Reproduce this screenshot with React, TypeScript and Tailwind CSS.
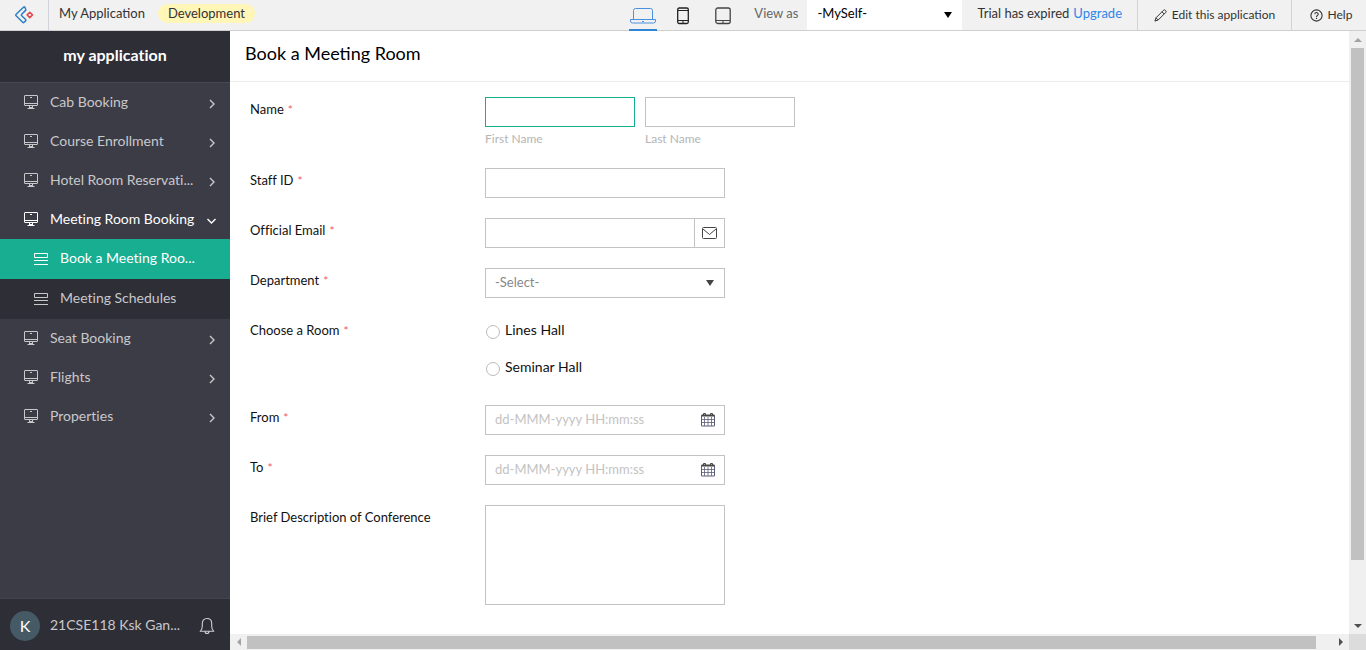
import { useState } from "react";
import type { ReactNode } from "react";

function CreatorLogo() {
  return (
    <svg width="20" height="20" viewBox="0 0 20 20" fill="none" strokeWidth="1.5" aria-hidden="true">
      <path d="M9.5 2.2 2.1 9.2a1 1 0 0 0 0 1.5l6.600 6.600a1 1 0 0 0 1.400 0l1.500-1.400a1 1 0 0 0 0-1.400L7.700 10.800a1 1 0 0 1 0-1.500l3.900-3.900a1 1 0 0 0 0-1.400L10.900 2.300a1 1 0 0 0-1.400-.1Z" stroke="#2f7fc4" strokeLinejoin="round" />
      <path d="m15.8 7.2 2.7 2.7-2.7 2.7-2.7-2.7Z" stroke="#e5484d" strokeLinejoin="round" />
    </svg>
  );
}

function LaptopIcon() {
  return (
    <svg width="26" height="18" viewBox="0 0 26 18" fill="none" stroke="#4a90e2" aria-hidden="true">
      <path d="M3.5 12.5v-9a2 2 0 0 1 2-2h15a2 2 0 0 1 2 2v9" />
      <path d="M.5 12.500h25v1.500a2 2 0 0 1-2 2h-21a2 2 0 0 1-2-2Z" />
      <path d="M12 14.500h2" />
    </svg>
  );
}

function PhoneIcon() {
  return (
    <svg width="12" height="18" viewBox="0 0 12 18" fill="none" stroke="#222" aria-hidden="true">
      <rect x=".7" y="1" width="10.6" height="15.500" rx="1.500" strokeWidth="1.3" />
      <path d="M1 3.5h10M1 13.5h10M5 15h2" />
    </svg>
  );
}

function TabletIcon() {
  return (
    <svg width="16" height="18" viewBox="0 0 16 18" fill="none" stroke="#444" aria-hidden="true">
      <rect x=".8" y="1" width="14.4" height="15.500" rx="2" strokeWidth="1.3" />
      <path d="M1 13.5h14M7 15h2" />
    </svg>
  );
}

function PencilIcon() {
  return (
    <svg width="13" height="13" viewBox="0 0 13 13" fill="none" stroke="#333" strokeLinejoin="round" aria-hidden="true">
      <path d="M.9 12.1 2 8.8 9.6 1.2a1.2 1.2 0 0 1 1.6 0l.6.6a1.2 1.2 0 0 1 0 1.6L4.2 11ZM8 2.8 10.2 5M2 8.8 4.2 11" />
    </svg>
  );
}

function HelpIcon() {
  return (
    <svg width="13" height="13" viewBox="0 0 13 13" fill="none" stroke="#333" strokeWidth="1.1" aria-hidden="true">
      <circle cx="6.5" cy="6.5" r="5.6" />
      <path d="M4.8 5.3a1.7 1.7 0 1 1 2.4 1.5c-.5.3-.7.5-.7 1.1M6.5 8.8v1.1" />
    </svg>
  );
}

function MonitorIcon() {
  return (
    <svg width="16" height="14" viewBox="0 0 16 14" fill="none" stroke="currentColor" aria-hidden="true">
      <rect x="1.500" y=".5" width="13" height="10" rx=".5" />
      <path d="M2 8.5h12M7 2.5h2M6.5 10.5v2M9.5 10.5v2M4.500 13.500h7M6 12.500h4" />
    </svg>
  );
}

function FormIcon() {
  return (
    <svg width="14" height="12" viewBox="0 0 14 12" fill="none" stroke="currentColor" aria-hidden="true">
      <path d="M.5.5h13v4H.5ZM0 7.500h14M0 11.5h14" />
    </svg>
  );
}

function Chevron({ down = false }: { down?: boolean }) {
  return (
    <svg width="10" height="10" viewBox="0 0 10 10" fill="none" stroke="currentColor" strokeWidth="1.4" aria-hidden="true">
      <path d={down ? "m.5 3 4 4 4-4" : "m3 1 4 4-4 4"} />
    </svg>
  );
}

function BellIcon() {
  return (
    <svg width="16" height="18" viewBox="0 0 16 18" fill="none" stroke="#d0d0d2" strokeWidth="1.1" aria-hidden="true">
      <path d="M1.2 14.3c1.6-1.4 2.1-2.600 2.100-5V6.500C3.300 3.500 5 1.500 8 1.500s4.700 2 4.700 5v2.800c0 2.400.5 3.600 2.100 5ZM6 14.500a2 2 0 0 0 4 0" strokeLinejoin="round" />
    </svg>
  );
}

function MailIcon() {
  return (
    <svg width="15" height="12" viewBox="0 0 15 12" fill="none" stroke="#444" aria-hidden="true">
      <rect x=".5" y=".5" width="14" height="11" rx="1" />
      <path d="m1 2 6.500 5.500L14 2" />
    </svg>
  );
}

function CalendarIcon() {
  return (
    <svg width="14" height="15" viewBox="0 0 14 15" fill="none" stroke="#5c5d78" aria-hidden="true">
      <path d="M.5 3.500h13v10.500H.5Z" />
      <path d="M.5 3.500h13" stroke="#444" strokeWidth="2" />
      <path d="M.5 7.500h13M.5 10.500h13M3.500 5v9M7 5v9M10.500 5v9" strokeWidth=".8" />
      <path d="M2.500 3V1.500h2V3M9.500 3V1.500h2V3" stroke="#444" />
    </svg>
  );
}

type TriangleDir = "up" | "down" | "left" | "right";
const trianglePaths: Record<TriangleDir, string> = {
  up: "M0 6 4 2l4 4Z",
  down: "M0 2h8L4 6Z",
  left: "M6 0v8L2 4Z",
  right: "M2 0v8l4-4Z",
};

function Triangle({ dir, color }: { dir: TriangleDir; color: string }) {
  return (
    <svg width="8" height="8" viewBox="0 0 8 8" fill={color} aria-hidden="true">
      <path d={trianglePaths[dir]} />
    </svg>
  );
}

function SelectArrow({ color }: { color: string }) {
  return (
    <svg width="10" height="8" viewBox="0 0 10 8" fill={color} aria-hidden="true">
      <path d="M1 1h8L5 7Z" />
    </svg>
  );
}

function TopBar() {
  const [device, setDevice] = useState("laptop");
  const devices: { id: string; name: string; icon: ReactNode }[] = [
    { id: "laptop", name: "Desktop", icon: <LaptopIcon /> },
    { id: "phone", name: "Phone", icon: <PhoneIcon /> },
    { id: "tablet", name: "Tablet", icon: <TabletIcon /> },
  ];
  return (
    <header className="flex h-[31px] shrink-0 items-stretch border-b border-[#cfcfd2] bg-[#f1f1f1] text-[13px] text-[#333]">
      <a href="#home" aria-label="Creator home" className="flex w-[49px] items-center justify-center border-r border-[#d2d2dc]">
        <CreatorLogo />
      </a>
      <div className="flex items-center gap-[13px] pb-[3px] pl-[10px]">
        <span>My Application</span>
        <span className="rounded-full bg-[#fff6b8] px-[10px] leading-[19px]">Development</span>
      </div>
      <div className="ml-auto flex items-stretch">
        <div className="flex gap-3 pr-[17px]">
          {devices.map((d) => (
            <button
              key={d.id}
              type="button"
              aria-label={d.name}
              onClick={() => setDevice(d.id)}
              className={`-mb-px flex w-7 items-center justify-center border-b-2 pt-[2px] ${device === d.id ? "border-[#2f86d6]" : "border-transparent"}`}
            >
              {d.icon}
            </button>
          ))}
        </div>
        <label htmlFor="view-as" className="flex items-center pb-[3px] pr-[9px] text-[#666]">View as</label>
        <div className="relative">
          <select id="view-as" className="h-full w-[155px] appearance-none bg-white pb-[2px] pl-[10px] text-[13px] text-black outline-none">
            <option>-MySelf-</option>
          </select>
          <span className="pointer-events-none absolute right-[9px] top-[11px]">
            <SelectArrow color="#000" />
          </span>
        </div>
        <div className="flex items-center gap-1 px-[15px] pb-[3px]">
          <span>Trial has expired</span>
          <a href="#upgrade" className="text-[#2f86e8]">Upgrade</a>
        </div>
        <button type="button" className="flex w-[154px] items-center justify-center gap-[5px] border-l border-[#d2d2dc] text-[12px]">
          <PencilIcon />
          Edit this application
        </button>
        <button type="button" className="flex w-[75px] items-center justify-center gap-[5px] border-l border-[#d2d2dc] pl-1 text-[12px]">
          <HelpIcon />
          Help
        </button>
      </div>
    </header>
  );
}

function NavItem({ title, open = false }: { title: string; open?: boolean }) {
  return (
    <a href="#section" className={`flex h-[39px] items-center pb-[2px] pl-[23px] pr-[13px] ${open ? "text-white" : "text-[#c8c8cb]"}`}>
      <MonitorIcon />
      <span className="ml-[11px] min-w-0 flex-1 truncate pb-px">{title}</span>
      <span className="ml-[6px] pt-[5px]"><Chevron down={open} /></span>
    </a>
  );
}

function SubItem({ title, active = false }: { title: string; active?: boolean }) {
  return (
    <a href="#page" className={`flex h-10 items-center gap-3 pl-[34px] pr-[20px] ${active ? "bg-[#18ae91] text-white" : "bg-[#2e2e37] text-[#c8c8cb]"}`}>
      <span className="shrink-0"><FormIcon /></span>
      <span className="truncate pb-[3px]">{title}</span>
    </a>
  );
}

function Sidebar() {
  return (
    <aside className="flex w-[230px] shrink-0 flex-col bg-[#3c3c46] text-[14px] [font-variant-ligatures:none]">
      <h2 className="flex h-[52px] shrink-0 items-center justify-center border-b border-[#484852] bg-[#2e2e37] pb-[4px] text-[16px] font-bold text-white">
        my application
      </h2>
      <nav className="min-h-0 flex-1 overflow-hidden">
        <NavItem title="Cab Booking" />
        <NavItem title="Course Enrollment" />
        <NavItem title="Hotel Room Reservati..." />
        <NavItem title="Meeting Room Booking" open />
        <SubItem title="Book a Meeting Roo..." active />
        <SubItem title="Meeting Schedules" />
        <NavItem title="Seat Booking" />
        <NavItem title="Flights" />
        <NavItem title="Properties" />
      </nav>
      <div className="flex h-[52px] shrink-0 items-center border-t border-[#44444f] bg-[#2e2e37] pl-[10px] pr-[15px] pt-[2px] text-[#c8c8cb]">
        <span className="flex size-[30px] shrink-0 items-center justify-center rounded-full bg-[#455a64] text-[16px] text-white">K</span>
        <span className="ml-[10px] whitespace-nowrap pb-[2px]">21CSE118 Ksk Gan...</span>
        <button type="button" aria-label="Notifications" className="ml-auto"><BellIcon /></button>
      </div>
    </aside>
  );
}

const box = "h-[30px] border bg-white px-[9px] text-[13px] outline-none focus:border-[#18ae91]";
const idle = "border-[#c3c3c3]";

function Row({ label, htmlFor, required = true, children }: { label: string; htmlFor?: string; required?: boolean; children: ReactNode }) {
  return (
    <div className="flex items-start">
      <label htmlFor={htmlFor} className="w-[235px] shrink-0 pt-1 text-[13px] leading-[17px] text-[#111]">
        {label}
        {required && <span className="ml-1 text-[12px] text-[#f25c5c]">*</span>}
      </label>
      {children}
    </div>
  );
}

function DateField({ id }: { id: string }) {
  return (
    <div className="relative">
      <input id={id} placeholder="dd-MMM-yyyy HH:mm:ss" className={`${box} ${idle} w-[240px] pb-[3px] placeholder:text-[#c3c3c3]`} />
      <button type="button" aria-label="Open calendar" className="absolute right-[10px] top-[7px]"><CalendarIcon /></button>
    </div>
  );
}

function BookingForm() {
  return (
    <form className="flex flex-col gap-5 px-5 pt-[15px] [font-variant-ligatures:none]">
      <Row label="Name" htmlFor="first-name">
        <div className="flex gap-[10px]">
          <div className="flex flex-col">
            <input id="first-name" className={`${box} w-[150px] border-[#18ae91]`} />
            <label htmlFor="first-name" className="pb-px pt-[3px] text-[12px] leading-[17px] text-[#b5b5b5]">First Name</label>
          </div>
          <div className="flex flex-col">
            <input id="last-name" className={`${box} ${idle} w-[150px]`} />
            <label htmlFor="last-name" className="pb-px pt-[3px] text-[12px] leading-[17px] text-[#b5b5b5]">Last Name</label>
          </div>
        </div>
      </Row>
      <Row label="Staff ID" htmlFor="staff-id">
        <input id="staff-id" className={`${box} ${idle} w-[240px]`} />
      </Row>
      <Row label="Official Email" htmlFor="email">
        <div className="flex">
          <input id="email" type="email" className={`${box} ${idle} w-[210px]`} />
          <span className="flex w-[30px] items-center justify-center border border-l-0 border-[#c3c3c3]"><MailIcon /></span>
        </div>
      </Row>
      <Row label="Department" htmlFor="department">
        <div className="relative">
          <select id="department" className={`${box} ${idle} w-[240px] appearance-none pb-px text-[#888]`}>
            <option>-Select-</option>
          </select>
          <span className="pointer-events-none absolute right-[10px] top-[11px]"><SelectArrow color="#444" /></span>
        </div>
      </Row>
      <Row label="Choose a Room">
        <div className="flex flex-col gap-[15px] pb-[7px] pt-px text-[14px] leading-[22px] text-[#111]">
          {["Lines Hall", "Seminar Hall"].map((room) => (
            <label key={room} className="flex gap-[5px] pl-px">
              <input type="radio" name="room" value={room} className="mt-[6px] size-[14px] appearance-none rounded-full border border-[#bbb] bg-white checked:border-4 checked:border-[#18ae91]" />
              {room}
            </label>
          ))}
        </div>
      </Row>
      <Row label="From" htmlFor="from"><DateField id="from" /></Row>
      <Row label="To" htmlFor="to"><DateField id="to" /></Row>
      <Row label="Brief Description of Conference" htmlFor="description" required={false}>
        <textarea id="description" className="h-[100px] w-[240px] resize-none border border-[#c3c3c3] px-[9px] py-1 text-[13px] outline-none" />
      </Row>
    </form>
  );
}

export default function App() {
  return (
    <div className="flex h-screen flex-col overflow-hidden bg-white font-['Lato',sans-serif]">
      <TopBar />
      <div className="flex min-h-0 flex-1">
        <Sidebar />
        <div className="flex min-w-0 flex-1 flex-col">
          <div className="flex min-h-0 flex-1">
            <main className="min-w-0 flex-1 overflow-hidden">
              <h1 className="flex h-[51px] items-center border-b border-[#ececec] px-[15px] pb-[6px] text-[18px] text-black">Book a Meeting Room</h1>
              <BookingForm />
            </main>
            <div className="flex w-[17px] shrink-0 flex-col bg-[#f0f0f0]">
              <span className="flex h-[17px] items-center justify-center"><Triangle dir="up" color="#a3a3a3" /></span>
              <div className="min-h-0 flex-1 px-[2px]"><div className="h-[90%] bg-[#c1c1c1]" /></div>
              <span className="flex h-[17px] items-center justify-center"><Triangle dir="down" color="#505050" /></span>
            </div>
          </div>
          <div className="flex h-4 shrink-0 bg-[#f0f0f0]">
            <span className="flex w-[17px] items-center justify-center"><Triangle dir="left" color="#a3a3a3" /></span>
            <div className="flex min-w-0 flex-1 pb-px pt-[2px]"><div className="w-[98.5%] bg-[#c1c1c1]" /></div>
            <span className="flex w-[17px] items-center justify-center"><Triangle dir="right" color="#505050" /></span>
            <span className="w-[17px] bg-[#dcdcdc]" />
          </div>
        </div>
      </div>
    </div>
  );
}
